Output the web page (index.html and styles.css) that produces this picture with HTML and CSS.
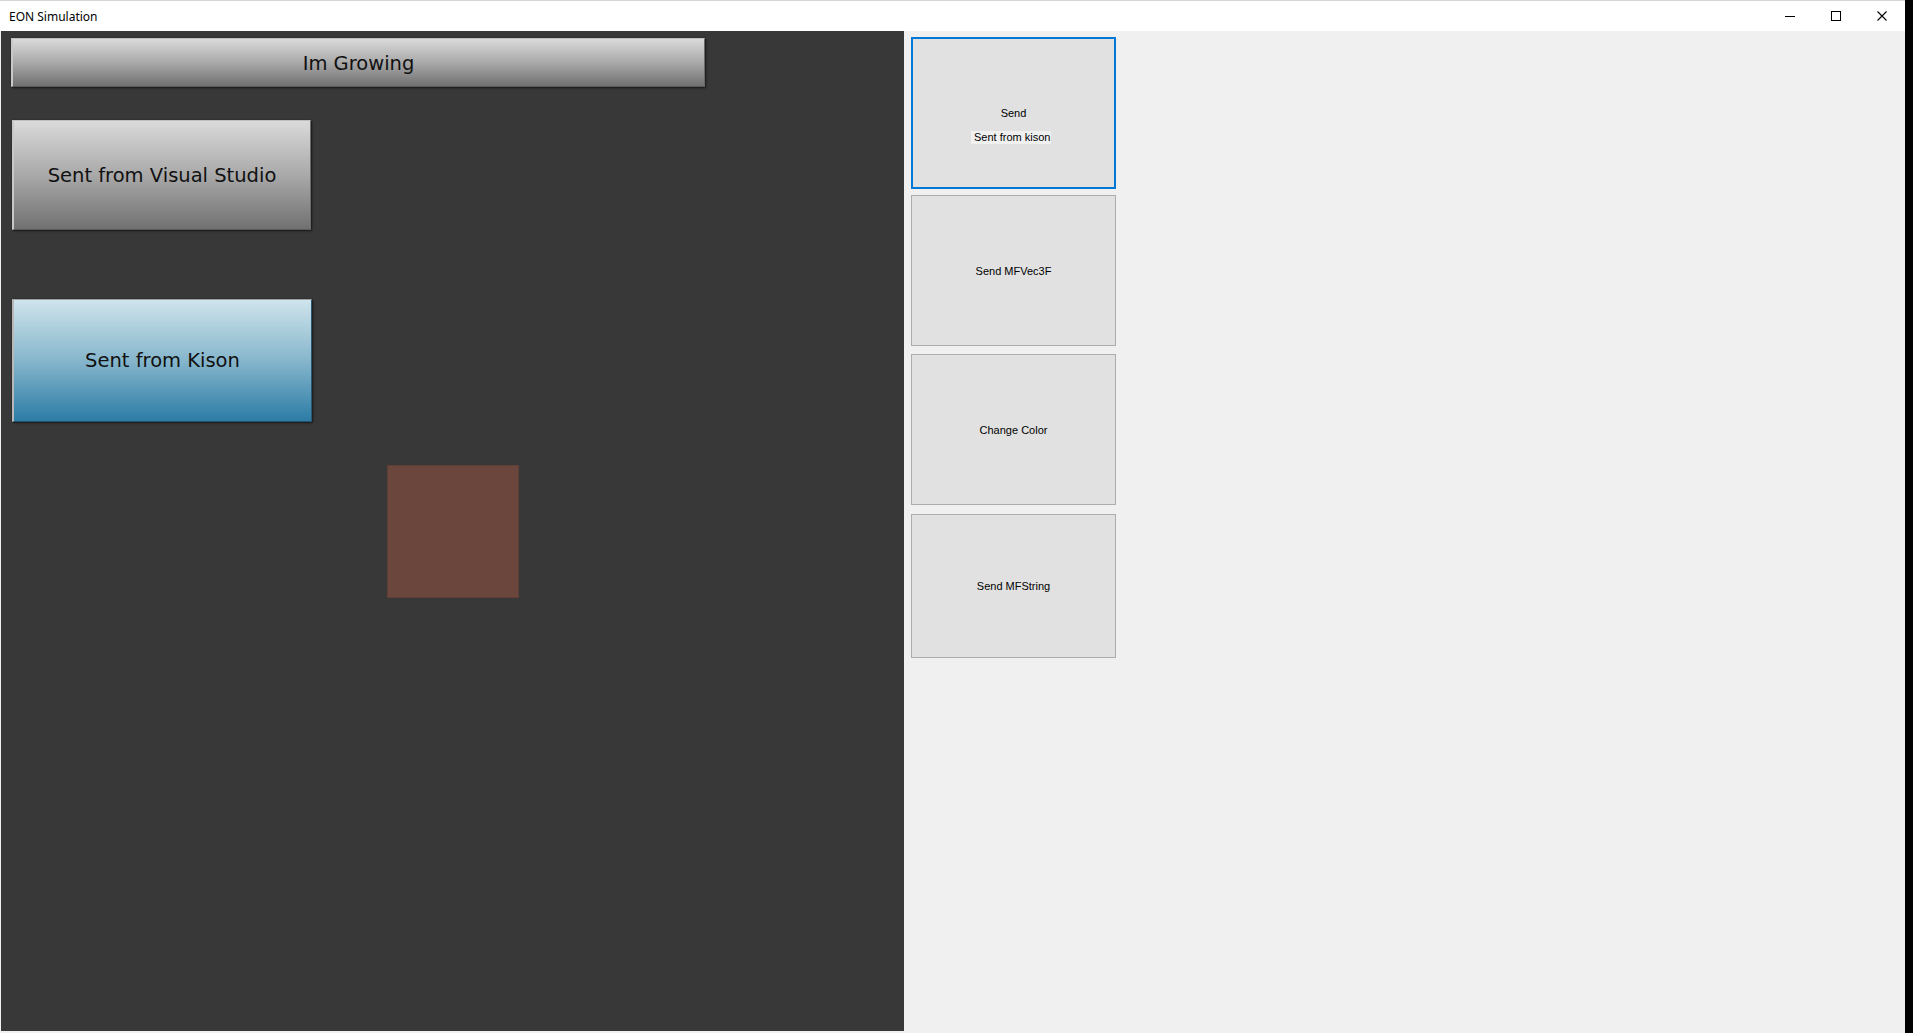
FILE: index.html
```html
<!DOCTYPE html>
<html>
<head>
<meta charset="utf-8">
<title>EON Simulation</title>
<link rel="stylesheet" href="styles.css">
</head>
<body>
<div class="window">
  <div class="titlebar">
    <span class="title">EON Simulation</span>
    <div class="controls">
      <span class="ctl"><svg width="10" height="10" viewBox="0 0 10 10"><line x1="0" y1="5.5" x2="10" y2="5.5" stroke="#000" stroke-width="1"/></svg></span>
      <span class="ctl"><svg width="10" height="10" viewBox="0 0 10 10"><rect x="0.5" y="0.5" width="9" height="9" fill="none" stroke="#000" stroke-width="1"/></svg></span>
      <span class="ctl"><svg width="10" height="10" viewBox="0 0 10 10"><path d="M0.5 0.5 L9.5 9.5 M9.5 0.5 L0.5 9.5" stroke="#000" stroke-width="1.1" fill="none"/></svg></span>
    </div>
  </div>
  <div class="client">
    <div class="scene">
      <div class="gbtn grey grow">Im Growing</div>
      <div class="gbtn grey vs">Sent from Visual Studio</div>
      <div class="gbtn blue kison">Sent from Kison</div>
      <div class="square"></div>
    </div>
    <div class="side">
      <div class="wbtn focused b1">
        <span>Send</span>
        <span class="label">Sent from kison</span>
      </div>
      <div class="wbtn b2"><span>Send MFVec3F</span></div>
      <div class="wbtn b3"><span>Change Color</span></div>
      <div class="wbtn b4"><span>Send MFString</span></div>
    </div>
  </div>
</div>
</body>
</html>
```
FILE: styles.css
```css
html, body {
  margin: 0;
  padding: 0;
  background: #000;
  overflow: hidden;
}
.window {
  width: 1905px;
  height: 1033px;
  background: #f0f0f0;
  display: flex;
  flex-direction: column;
}
.titlebar {
  height: 30px;
  border-top: 1px solid #d4d4d4;
  background: #fff;
  display: flex;
  align-items: center;
  justify-content: space-between;
  flex: none;
}
.title {
  font-family: "Noto Sans", "Open Sans", sans-serif;
  font-size: 12px;
  color: #000;
  margin-left: 9px;
  margin-top: 0px;
}
.controls {
  display: flex;
  align-items: center;
  margin-right: 18px;
}
.ctl {
  display: flex;
  width: 10px;
  height: 10px;
  margin-left: 36px;
}
.client {
  display: flex;
  flex: none;
  height: 1000px;
}
.scene {
  width: 903px;
  height: 1000px;
  margin-left: 1px;
  background: #383838;
  display: flex;
  flex-direction: column;
  align-items: flex-start;
  padding: 7px 0 0 10px;
  box-sizing: border-box;
  flex: none;
}
.gbtn {
  font-family: "DejaVu Sans", sans-serif;
  font-size: 19.5px;
  color: #111;
  display: flex;
  align-items: center;
  justify-content: center;
  box-sizing: border-box;
  box-shadow: 1px 1px 2px rgba(0,0,0,0.55), 0 0 1px rgba(0,0,0,0.4);
}
.grey {
  background: linear-gradient(to bottom, #dadada 0%, #a9a9a9 50%, #717171 100%);
  border-top: 1px solid #bdbdbd;
  border-left: 2px solid #c8c8c8;
  border-right: 1px solid #6a6a6a;
  border-bottom: 1px solid #5a5a5a;
}
.blue {
  background: linear-gradient(to bottom, #cfe4ec 0%, #86b6cc 50%, #2c7ca6 100%);
  border-top: 1px solid #a0a0a0;
  border-left: 2px solid #b8b8b8;
  border-right: 1px solid #2a5870;
  border-bottom: 1px solid #245070;
}
.grow {
  width: 694px;
  height: 49px;
  margin-left: 0;
  padding-top: 2px;
}
.vs {
  width: 299px;
  height: 110px;
  margin-top: 33px;
  margin-left: 1px;
}
.kison {
  width: 300px;
  height: 123px;
  margin-top: 69px;
  margin-left: 1px;
}
.square {
  width: 132px;
  height: 133px;
  margin-top: 43px;
  margin-left: 376px;
  background: #6b463c;
  border: 1px solid #5e3e35;
  box-sizing: border-box;
}
.side {
  flex: 1;
  background: #f0f0f0;
  display: flex;
  flex-direction: column;
  align-items: flex-start;
  padding: 6px 0 0 7px;
  box-sizing: border-box;
}
.wbtn {
  position: relative;
  width: 205px;
  background: #e1e1e1;
  border: 1px solid #adadad;
  box-sizing: border-box;
  display: flex;
  align-items: center;
  justify-content: center;
  font-family: "Liberation Sans", Arial, sans-serif;
  font-size: 11px;
  color: #000;
}
.focused {
  border: 2px solid #0078d7;
}
.b1 { height: 152px; }
.b2 { height: 151px; margin-top: 6px; }
.b3 { height: 151px; margin-top: 8px; }
.b4 { height: 144px; margin-top: 9px; }
.label {
  position: absolute;
  left: 58px;
  top: 92px;
  width: 80px;
  height: 13px;
  line-height: 13px;
  background: #f0f0f0;
  padding-left: 3px;
  box-sizing: border-box;
  white-space: nowrap;
}
```
